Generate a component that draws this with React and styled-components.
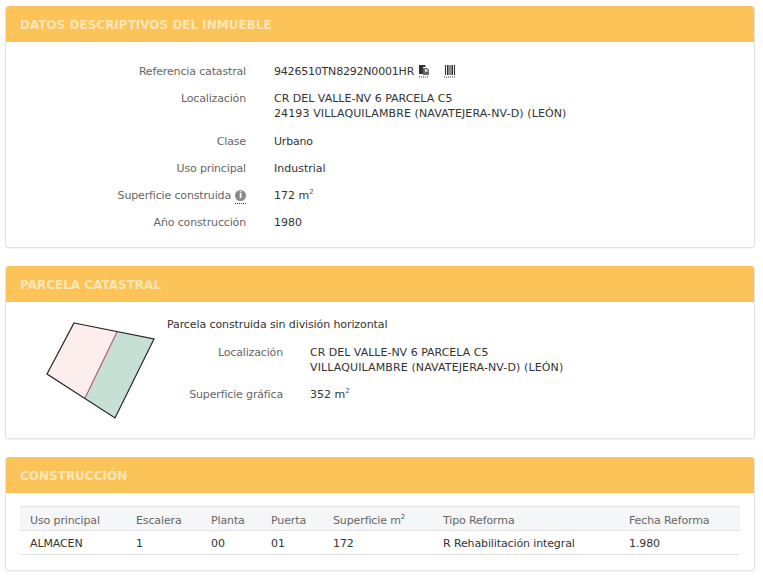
import React from "react"
import styled, { createGlobalStyle } from "styled-components"

const GlobalStyle = createGlobalStyle`
  html, body {
    margin: 0;
    background: #fff;
  }

  body {
    font-family: "DejaVu Sans", Verdana, sans-serif;
    font-size: 11px;
    line-height: 15px;
    color: #333;
  }
`

const columns = [
  { title: `Uso principal`, value: `ALMACEN`, width: 106 },
  { title: `Escalera`, value: `1`, width: 75 },
  { title: `Planta`, value: `00`, width: 60 },
  { title: `Puerta`, value: `01`, width: 62 },
  {
    title: (
      <>
        Superficie m<sup>2</sup>
      </>
    ),
    value: `172`,
    width: 110,
  },
  { title: `Tipo Reforma`, value: `R Rehabilitación integral`, width: 186 },
  { title: `Fecha Reforma`, value: `1.980`, width: 121 },
]

const ExportIcon = () => (
  <IconLink>
    <svg width="12" height="13" viewBox="0 0 12 13">
      <path d="M1 0h6l1 2H5v7H1z" fill="#333" />
      <path d="M5 3h4l2 2v5H5z" fill="#666" />
      <path d="M7 3.5 10.5 6.5H7z" fill="#fff" />
      <path d="M1 12h10" stroke="#333" strokeDasharray="1 1" />
    </svg>
  </IconLink>
)

const BarcodeIcon = () => (
  <IconLink>
    <svg width="12" height="13" viewBox="0 0 12 13">
      <path
        d="M1.5 0v10M3.5 0v10M5 0v10M7 0v10M8.5 0v10M10.5 0v10"
        stroke="#333"
        strokeWidth="1.1"
      />
      <path d="M0 12h12" stroke="#333" strokeDasharray="1 1" />
    </svg>
  </IconLink>
)

const ParcelDrawing = () => (
  <ParcelSvg width="120" height="110" viewBox="42 316 120 110">
    <polygon points="74,323 117,332 85,398 47,374" fill="#fdeeee" />
    <polygon points="117,332 154,339 115,418 85,398" fill="#c6e0d6" />
    <line x1="117" y1="332" x2="85" y2="398" stroke="#b5606a" strokeWidth="1.2" />
    <polygon
      points="74,323 154,339 115,418 47,374"
      fill="none"
      stroke="#222"
      strokeWidth="1.2"
    />
  </ParcelSvg>
)

const App = () => {
  return (
    <>
      <GlobalStyle />
      <Page>
        <Panel>
          <PanelHeading>Datos descriptivos del inmueble</PanelHeading>
          <DetailBody>
            <Row>
              <Label>Referencia catastral</Label>
              <Value $spacing={-0.2}>
                9426510TN8292N0001HR
                <ExportIcon />
                <BarcodeIcon />
              </Value>
            </Row>
            <Row $tall>
              <Label>Localización</Label>
              <Value>
                CR DEL VALLE-NV 6 PARCELA C5
                <br />
                <AddressLine>
                  24193 VILLAQUILAMBRE (NAVATEJERA-NV-D) (LEÓN)
                </AddressLine>
              </Value>
            </Row>
            <Row>
              <Label>Clase</Label>
              <Value $spacing={-0.2}>Urbano</Value>
            </Row>
            <Row>
              <Label>Uso principal</Label>
              <Value>Industrial</Value>
            </Row>
            <Row>
              <Label>
                Superficie construida
                <InfoBadge>i</InfoBadge>
              </Label>
              <Value>
                172 m<sup>2</sup>
              </Value>
            </Row>
            <Row>
              <Label>Año construcción</Label>
              <Value>1980</Value>
            </Row>
          </DetailBody>
        </Panel>

        <Panel>
          <PanelHeading>Parcela catastral</PanelHeading>
          <ParcelBody>
            <ParcelDrawing />
            <ParcelInfo>
              <ParcelNote>Parcela construida sin división horizontal</ParcelNote>
              <ParcelRow>
                <Label>Localización</Label>
                <Value>
                  CR DEL VALLE-NV 6 PARCELA C5
                  <br />
                  <AddressLine>VILLAQUILAMBRE (NAVATEJERA-NV-D) (LEÓN)</AddressLine>
                </Value>
              </ParcelRow>
              <ParcelRow>
                <Label>Superficie gráfica</Label>
                <Value>
                  352 m<sup>2</sup>
                </Value>
              </ParcelRow>
            </ParcelInfo>
          </ParcelBody>
        </Panel>

        <Panel>
          <PanelHeading>Construcción</PanelHeading>
          <TableBody>
            <Table>
              <colgroup>
                {columns.map((column, i) => (
                  <col key={i} width={column.width} />
                ))}
              </colgroup>
              <thead>
                <tr>
                  {columns.map((column, i) => (
                    <HeadCell key={i}>{column.title}</HeadCell>
                  ))}
                </tr>
              </thead>
              <tbody>
                <tr>
                  {columns.map((column, i) => (
                    <Cell key={i}>{column.value}</Cell>
                  ))}
                </tr>
              </tbody>
            </Table>
          </TableBody>
        </Panel>
      </Page>
    </>
  )
}

export default App

const Page = styled.main`
  width: 750px;
  padding: 6px 0 0 5px;

  sup {
    font-size: 7px;
    line-height: 0;
    color: #555;
  }
`

const Panel = styled.section`
  margin-bottom: 18px;
  border: 1px solid #e2e2e2;
  border-top: 0;
  border-radius: 4px;
  box-shadow: 0 1px 1px rgba(0, 0, 0, 0.05);
  background: #fff;
  overflow: hidden;
`

const PanelHeading = styled.h2`
  box-sizing: border-box;
  height: 36px;
  margin: 0;
  padding: 12px 14px 0;
  background: #fcc358;
  color: #fbe6b8;
  font-size: 12px;
  line-height: 15px;
  font-weight: bold;
  text-transform: uppercase;
`

const DetailBody = styled.div`
  display: flex;
  flex-direction: column;
  gap: 12px;
  padding: 22px 0 17px;
`

const Row = styled.div`
  display: grid;
  grid-template-columns: 240px 1fr;
  column-gap: 28px;
  height: ${({ $tall }) => ($tall ? `31px` : `15px`)};
`

const Label = styled.div`
  display: flex;
  justify-content: flex-end;
  align-items: center;
  align-self: start;
  height: 15px;
  color: #666;
  letter-spacing: -0.15px;
  white-space: nowrap;
`

const Value = styled.div`
  color: #333;
  letter-spacing: ${({ $spacing }) => $spacing || 0}px;
  white-space: nowrap;
`

const AddressLine = styled.span`
  letter-spacing: 0.12px;
`

const IconLink = styled.span`
  display: inline-block;
  height: 13px;
  margin-left: 4px;
  vertical-align: -3px;

  & + & {
    margin-left: 14px;
  }
`

const InfoBadge = styled.span`
  position: relative;
  display: inline-block;
  width: 11px;
  height: 11px;
  margin-left: 4px;
  border-radius: 50%;
  background: #8a8a8a;
  color: #fff;
  font-size: 8px;
  line-height: 11px;
  font-weight: bold;
  text-align: center;
  letter-spacing: 0;

  &::after {
    content: "";
    position: absolute;
    left: 0;
    right: 0;
    bottom: -3px;
    border-bottom: 1px dotted #333;
  }
`

const ParcelBody = styled.div`
  display: flex;
  align-items: flex-start;
  height: 136px;
`

const ParcelSvg = styled.svg`
  flex: none;
  margin: 14px 0 0 36px;
`

const ParcelInfo = styled.div`
  display: flex;
  flex-direction: column;
  gap: 12px;
  margin-left: 5px;
  padding-top: 15px;
`

const ParcelNote = styled.p`
  margin: 0 0 1px;
  color: #333;
  letter-spacing: -0.1px;
`

const ParcelRow = styled.div`
  display: grid;
  grid-template-columns: 116px 1fr;
  column-gap: 27px;
`

const TableBody = styled.div`
  padding: 13px 14px 15px;
`

const Table = styled.table`
  width: 720px;
  border-collapse: collapse;
  table-layout: fixed;
  letter-spacing: -0.12px;
`

const HeadCell = styled.th`
  box-sizing: border-box;
  height: 24px;
  padding: 3px 10px 0;
  border-top: 1px solid #e4e4e4;
  border-bottom: 1px solid #e4e4e4;
  background: #f5f6f7;
  color: #666;
  font-weight: normal;
  text-align: left;
  white-space: nowrap;
`

const Cell = styled.td`
  box-sizing: border-box;
  height: 24px;
  padding: 2px 10px 0;
  border-bottom: 1px solid #e4e4e4;
  color: #333;
  white-space: nowrap;
`
